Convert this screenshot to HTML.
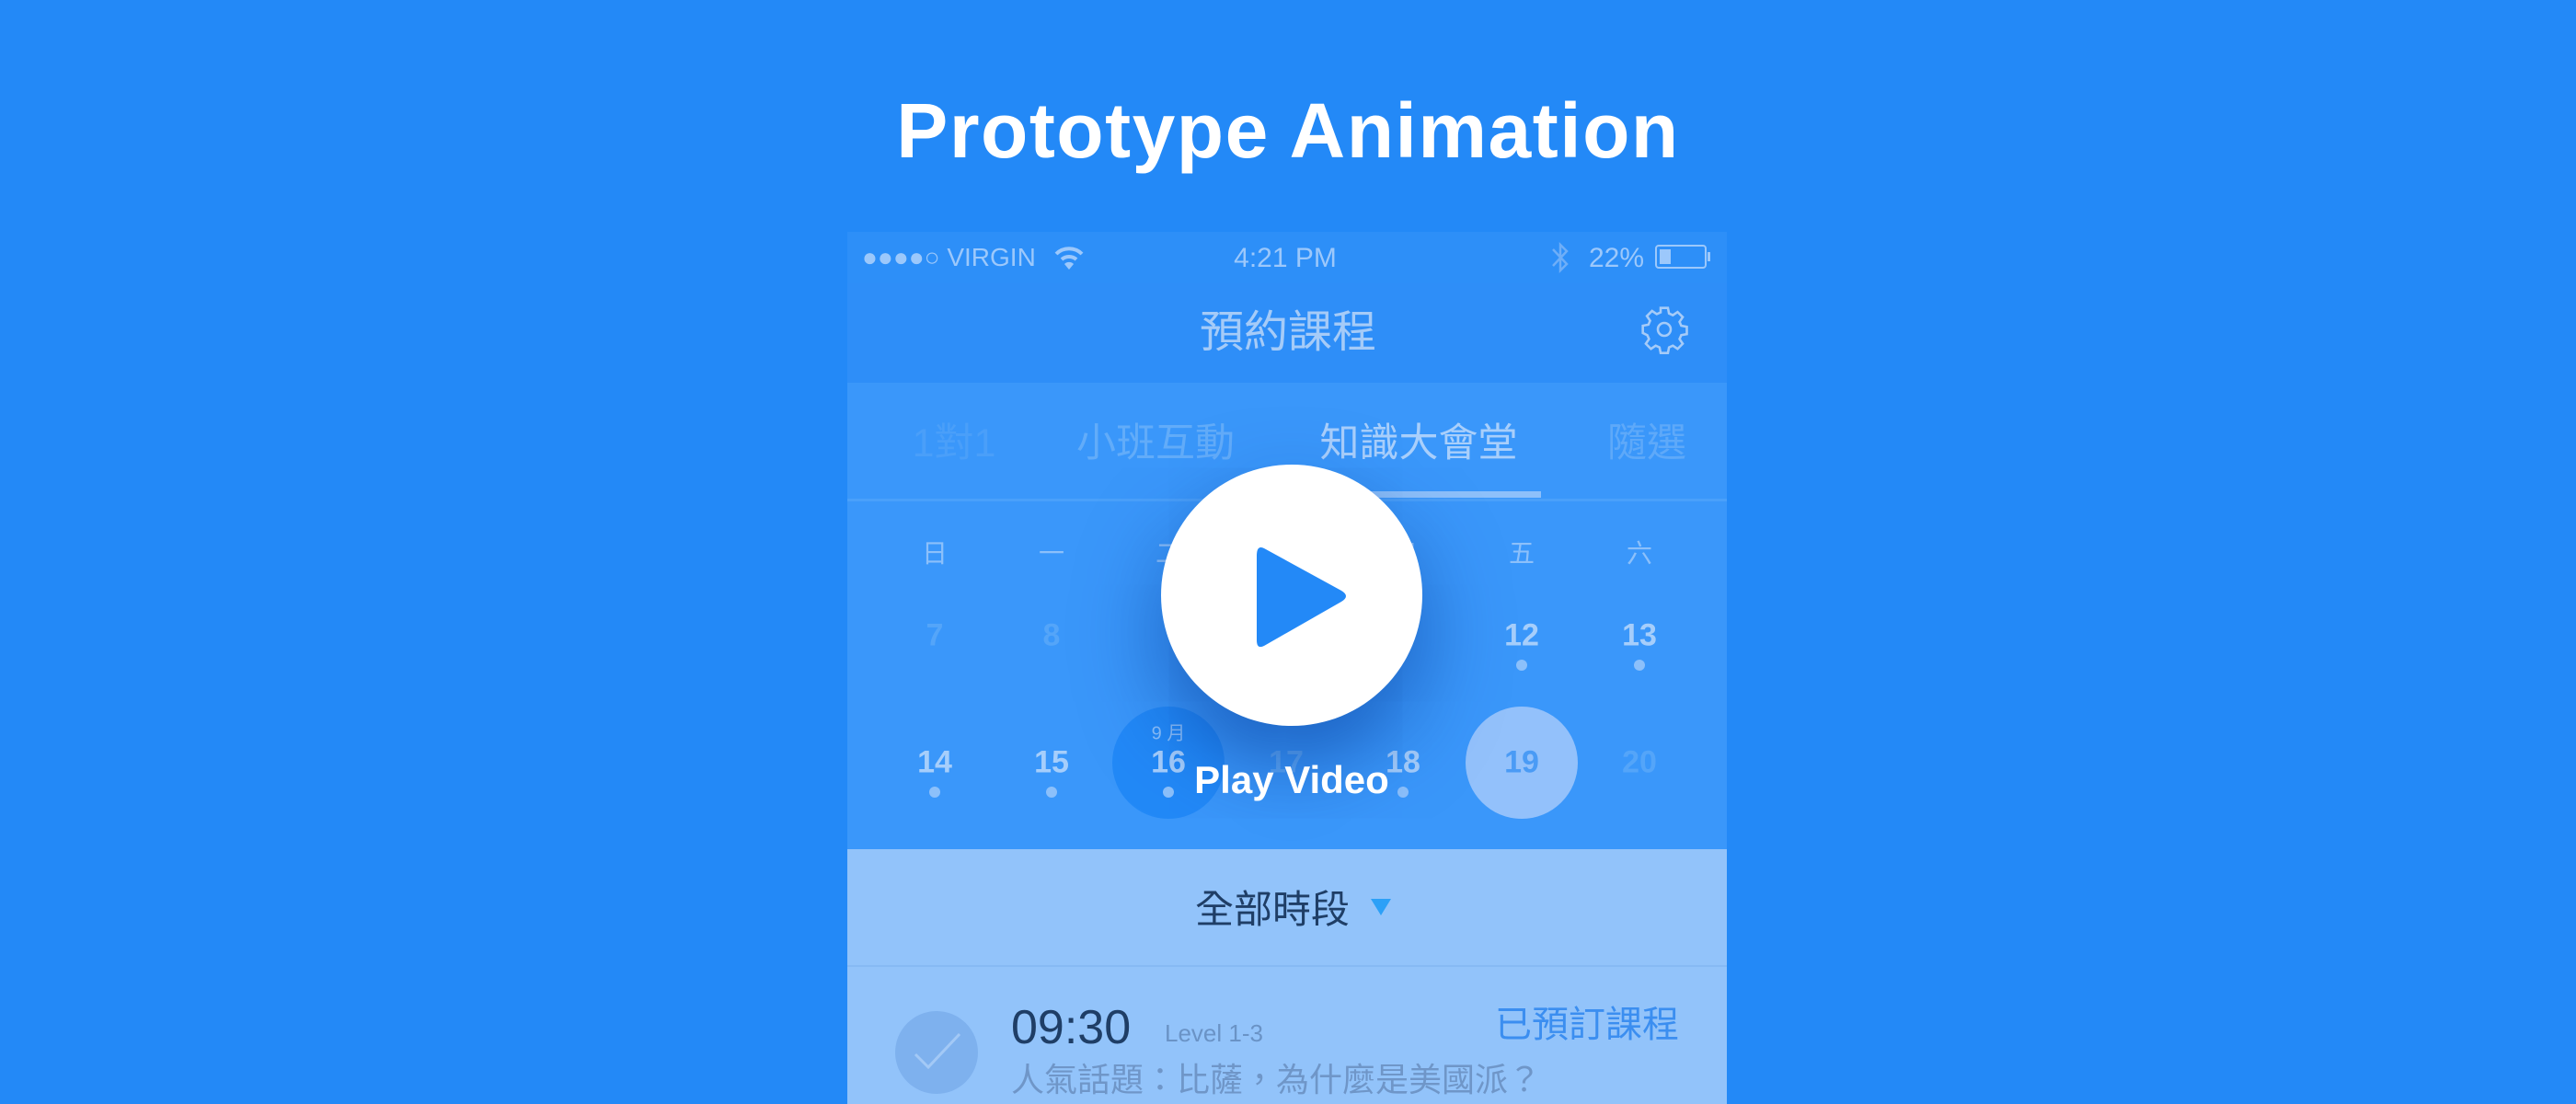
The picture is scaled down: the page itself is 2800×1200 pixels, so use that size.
<!DOCTYPE html>
<html><head><meta charset="utf-8"><style>
*{margin:0;padding:0;box-sizing:border-box}
body{width:2800px;height:1200px;background:#2389F7;position:relative;overflow:hidden;font-family:"Liberation Sans","Noto Sans CJK TC",sans-serif}
.a{position:absolute;white-space:nowrap}
.c{transform:translateX(-50%)}
.cy{transform:translate(-50%,-50%)}
</style></head><body>
<div class="a c" style="left:1400px;top:94px;font-size:84px;font-weight:bold;color:#fff;letter-spacing:1.5px">Prototype Animation</div>

<div class="a" style="left:921px;top:252px;width:956px;height:948px;overflow:hidden">
  <div class="a" style="left:0;top:0;width:956px;height:56px;background:#2D8FF8"></div>
  <div class="a" style="left:0;top:56px;width:956px;height:108px;background:#2E8EF8"></div>
  <div class="a" style="left:0;top:164px;width:956px;height:127px;background:#3A97FA"></div>
  <div class="a" style="left:0;top:290px;width:956px;height:3px;background:#4AA0FA"></div>
  <div class="a" style="left:522px;top:282px;width:232px;height:7px;background:#8DC0FA"></div>
  <div class="a" style="left:0;top:293px;width:956px;height:378px;background:#3A97FA"></div>
  <div class="a" style="left:0;top:671px;width:956px;height:127px;background:#92C3FA"></div>
  <div class="a" style="left:0;top:797px;width:956px;height:2px;background:#86B9F4"></div>
  <div class="a" style="left:0;top:799px;width:956px;height:200px;background:#92C3FA"></div>

  <!-- status -->
  <div class="a" style="left:16px;top:12px;font-size:28px;color:#9CC8FB">●●●●○ VIRGIN</div>
  <svg class="a" style="left:224px;top:14px" width="34" height="28" viewBox="0 0 34 28"><path d="M3 10 A20 20 0 0 1 31 10" stroke="#9CC8FB" stroke-width="4" fill="none"/><path d="M9 16 A12 12 0 0 1 25 16" stroke="#9CC8FB" stroke-width="4" fill="none"/><path d="M17 27 L12 21 A7 7 0 0 1 22 21Z" fill="#9CC8FB"/></svg>
  <div class="a c" style="left:476px;top:12px;font-size:30px;color:#9CC8FB">4:21 PM</div>
  <svg class="a" style="left:764px;top:10px" width="22" height="36" viewBox="0 0 22 36"><path d="M3 9 L18 25 L11 32 L11 4 L18 11 L3 27" stroke="#6EAEF8" stroke-width="2.5" fill="none"/></svg>
  <div class="a" style="left:806px;top:12px;font-size:30px;color:#9CC8FB">22%</div>
  <div class="a" style="left:878px;top:14px;width:56px;height:26px;border:2px solid #9CC8FB;border-radius:4px"><div style="margin:3px;width:12px;height:16px;background:#9CC8FB"></div></div>
  <div class="a" style="left:935px;top:22px;width:3px;height:10px;background:#9CC8FB"></div>

  <!-- nav -->
  <div class="a c" style="left:479px;top:69px;font-size:48px;color:#A5CBF8">預約課程</div>
  <svg class="a" style="left:860px;top:78px" width="56" height="56" viewBox="0 0 24 24"><path fill="none" stroke="#A5CBF8" stroke-width="1.1" d="M10.3 2h3.4l.5 2.6 1.8.8 2.2-1.5 2.4 2.4-1.5 2.2.8 1.8 2.6.5v3.4l-2.6.5-.8 1.8 1.5 2.2-2.4 2.4-2.2-1.5-1.8.8-.5 2.6h-3.4l-.5-2.6-1.8-.8-2.2 1.5-2.4-2.4 1.5-2.2-.8-1.8L2 13.7v-3.4l2.6-.5.8-1.8-1.5-2.2 2.4-2.4 2.2 1.5 1.8-.8z"/><circle cx="12" cy="12" r="3" fill="none" stroke="#A5CBF8" stroke-width="1.1"/></svg>

  <!-- tabs -->
  <div class="a c" style="left:116px;top:195px;font-size:43px;color:#4A9FF9">1對1</div>
  <div class="a c" style="left:335px;top:195px;font-size:43px;color:#62ACF9">小班互動</div>
  <div class="a c" style="left:621px;top:195px;font-size:43px;color:#A9CFFB">知識大會堂</div>
  <div class="a" style="left:826px;top:195px;font-size:43px;color:#5EA9F9">隨選</div>

  <!-- weekdays -->
  <div style="position:absolute;left:0;top:330px;font-size:28px;color:#8CC0FA">
    <span class="a cy" style="left:95px;top:18px">日</span>
    <span class="a cy" style="left:222px;top:18px">一</span>
    <span class="a cy" style="left:349px;top:18px">二</span>
    <span class="a cy" style="left:477px;top:18px">三</span>
    <span class="a cy" style="left:604px;top:18px">四</span>
    <span class="a cy" style="left:733px;top:18px">五</span>
    <span class="a cy" style="left:861px;top:18px">六</span>
  </div>
  <!-- row1 -->
  <div style="position:absolute;left:0;top:439px;font-size:34px;font-weight:bold">
    <span class="a cy" style="left:95px;top:0;color:#54A5F9">7</span>
    <span class="a cy" style="left:222px;top:0;color:#54A5F9">8</span>
    <span class="a cy" style="left:733px;top:0;color:#A6CEFB">12</span>
    <span class="a cy" style="left:861px;top:0;color:#A6CEFB">13</span>
  </div>
  <div class="a" style="left:727px;top:465px;width:12px;height:12px;border-radius:50%;background:#8CC0FA"></div>
  <div class="a" style="left:855px;top:465px;width:12px;height:12px;border-radius:50%;background:#8CC0FA"></div>
  <!-- row2 -->
  <div class="a" style="left:288px;top:516px;width:122px;height:122px;border-radius:50%;background:#2289F7"></div>
  <div class="a" style="left:672px;top:516px;width:122px;height:122px;border-radius:50%;background:#93C1FB"></div>
  <div class="a cy" style="left:349px;top:543px;font-size:20px;color:#8CC0FA">9 月</div>
  <div style="position:absolute;left:0;top:577px;font-size:34px;font-weight:bold">
    <span class="a cy" style="left:95px;top:0;color:#A6CEFB">14</span>
    <span class="a cy" style="left:222px;top:0;color:#A6CEFB">15</span>
    <span class="a cy" style="left:349px;top:0;color:#A6CEFB">16</span>
    <span class="a cy" style="left:477px;top:0;color:#5DAAF9">17</span>
    <span class="a cy" style="left:604px;top:0;color:#A6CEFB">18</span>
    <span class="a cy" style="left:733px;top:0;color:#4A9BF5">19</span>
    <span class="a cy" style="left:861px;top:0;color:#54A5F9">20</span>
  </div>
  <div class="a" style="left:89px;top:603px;width:12px;height:12px;border-radius:50%;background:#8CC0FA"></div>
  <div class="a" style="left:216px;top:603px;width:12px;height:12px;border-radius:50%;background:#8CC0FA"></div>
  <div class="a" style="left:343px;top:603px;width:12px;height:12px;border-radius:50%;background:#8CC0FA"></div>
  <div class="a" style="left:598px;top:603px;width:12px;height:12px;border-radius:50%;background:#8CC0FA"></div>

  <!-- filter -->
  <div class="a c" style="left:462px;top:703px;font-size:42px;color:#1F3E66">全部時段</div>
  <div class="a" style="left:569px;top:725px;width:0;height:0;border-left:11px solid transparent;border-right:11px solid transparent;border-top:18px solid #2CA0F7"></div>

  <!-- list row -->
  <div class="a" style="left:52px;top:847px;width:90px;height:90px;border-radius:50%;background:#7EB1EE"></div>
  <svg class="a" style="left:70px;top:868px" width="56" height="46" viewBox="0 0 56 46"><path d="M4 26 L18 40 L52 4" stroke="#A3C9F6" stroke-width="3" fill="none"/></svg>
  <div class="a" style="left:178px;top:835px;font-size:52px;color:#1F3E66">09:30</div>
  <div class="a" style="left:345px;top:856px;font-size:26px;color:#6A93C6">Level 1-3</div>
  <div class="a" style="right:52px;top:829px;font-size:40px;color:#3B8EF0">已預訂課程</div>
  <div class="a" style="left:178px;top:893px;font-size:36px;color:#6F96C8">人氣話題：比薩，為什麼是美國派？</div>
</div>

<!-- play overlay -->
<div class="a" style="left:1262px;top:505px;width:284px;height:284px;border-radius:50%;background:#fff;box-shadow:0 40px 90px rgba(0,50,140,0.55)"></div>
<svg class="a" style="left:1360px;top:590px" width="112" height="122" viewBox="0 0 112 122"><path d="M14 6 L98 52 Q108 58 98 64 L14 112 Q6 116 6 106 L6 14 Q6 2 14 6Z" fill="#2389F7"/></svg>
<div class="a c" style="left:1404px;top:824px;font-size:42px;font-weight:bold;color:#fff">Play Video</div>
</body></html>
